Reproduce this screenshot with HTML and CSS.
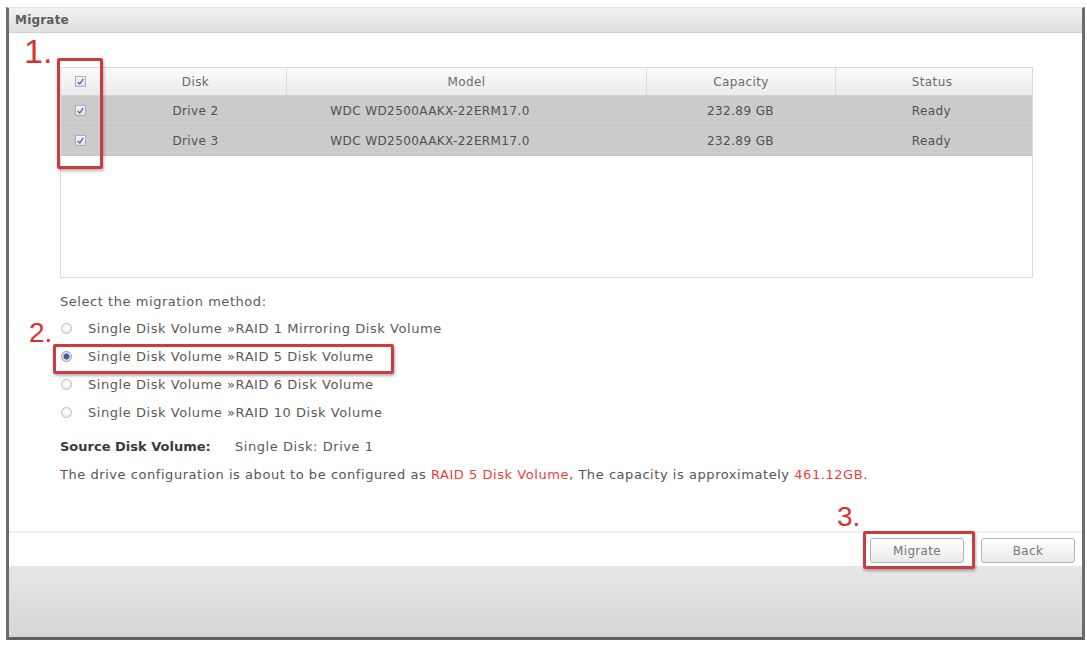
FILE: index.html
```html
<!DOCTYPE html>
<html>
<head>
<meta charset="utf-8">
<title>Migrate</title>
<link rel="stylesheet" href="styles.css">
</head>
<body>
<div class="dialog">
  <div class="titlebar">Migrate</div>

  <div class="content">
    <div class="grid">
      <div class="grid-row grid-head">
        <div class="cell cell-chk"><span class="chk"><svg viewBox="0 0 10 10"><polyline points="2,5.5 4.2,7.8 8,2.2"/></svg></span></div>
        <div class="cell">Disk</div>
        <div class="cell">Model</div>
        <div class="cell">Capacity</div>
        <div class="cell">Status</div>
      </div>
      <div class="grid-row grid-item">
        <div class="cell cell-chk"><span class="chk"><svg viewBox="0 0 10 10"><polyline points="2,5.5 4.2,7.8 8,2.2"/></svg></span></div>
        <div class="cell">Drive 2</div>
        <div class="cell cell-model">WDC WD2500AAKX-22ERM17.0</div>
        <div class="cell">232.89 GB</div>
        <div class="cell">Ready</div>
      </div>
      <div class="grid-row grid-item">
        <div class="cell cell-chk"><span class="chk"><svg viewBox="0 0 10 10"><polyline points="2,5.5 4.2,7.8 8,2.2"/></svg></span></div>
        <div class="cell">Drive 3</div>
        <div class="cell cell-model">WDC WD2500AAKX-22ERM17.0</div>
        <div class="cell">232.89 GB</div>
        <div class="cell">Ready</div>
      </div>
    </div>

    <div class="method-title">Select the migration method:</div>
    <div class="options">
      <label class="option"><span class="radio"></span>Single Disk Volume »RAID 1 Mirroring Disk Volume</label>
      <label class="option"><span class="radio radio-on"></span>Single Disk Volume »RAID 5 Disk Volume</label>
      <label class="option"><span class="radio"></span>Single Disk Volume »RAID 6 Disk Volume</label>
      <label class="option"><span class="radio"></span>Single Disk Volume »RAID 10 Disk Volume</label>
    </div>

    <div class="source"><span class="source-label">Source Disk Volume:</span><span>Single Disk: Drive 1</span></div>
    <div class="summary">The drive configuration is about to be configured as <span class="hl">RAID 5 Disk Volume</span>, The capacity is approximately <span class="hl">461.12GB</span>.</div>
  </div>

  <div class="actions">
    <button class="btn">Migrate</button>
    <button class="btn">Back</button>
  </div>
  <div class="footer"></div>
</div>

<!-- step callouts drawn over the dialog -->
<div class="step step-1">1.</div>
<div class="callout callout-1"></div>
<div class="step step-2">2.</div>
<div class="callout callout-2"></div>
<div class="step step-3">3.</div>
<div class="callout callout-3"></div>
</body>
</html>
```

FILE: styles.css
```css
html, body {
  margin: 0;
  padding: 0;
  background: #ffffff;
}

body {
  position: relative;
  width: 1087px;
  height: 646px;
  overflow: hidden;
  font-family: "DejaVu Sans", Verdana, sans-serif;
  font-size: 13px;
  letter-spacing: 0.55px;
  color: #5a5a5a;
}

.dialog {
  box-sizing: border-box;
  margin: 7px 0 0 6px;
  width: 1079px;
  height: 633px;
  border-top: 1px solid #e2e2e2;
  border-left: 3px solid #6c6c6c;
  border-right: 3px solid #6c6c6c;
  border-bottom: 3px solid #5e5e5e;
  display: flex;
  flex-direction: column;
  background: #fff;
}

.titlebar {
  height: 25px;
  flex: none;
  box-sizing: border-box;
  padding-left: 6px;
  line-height: 25px;
  font-size: 12px;
  letter-spacing: 0.2px;
  font-weight: bold;
  color: #5e5e5e;
  background: linear-gradient(#f3f3f3, #dedede);
  border-bottom: 1px solid #d0d0d0;
}

.content {
  flex: 1;
  padding: 34px 0 0 51px;
}

/* disk grid */
.grid {
  width: 973px;
  height: 211px;
  box-sizing: border-box;
  border: 1px solid #d9d9d9;
  font-size: 12px;
  letter-spacing: 0.4px;
}

.grid-row {
  display: grid;
  grid-template-columns: 44px 181px 360px 189px 193px;
}

.cell {
  display: flex;
  align-items: center;
  justify-content: center;
}

.cell-chk {
  justify-content: flex-start;
  padding-left: 14px;
}

.cell-model {
  padding-right: 72px;
}

.grid-head {
  height: 28px;
  background: linear-gradient(#fbfbfb, #ececec);
  border-bottom: 1px solid #d4d4d4;
  box-sizing: border-box;
  color: #6a6a6a;
}

.grid-head .cell + .cell + .cell {
  border-left: 1px solid #dcdcdc;
}

.grid-item {
  height: 30px;
  background: #cbcbcb;
  border-bottom: 1px solid #c2c2c2;
  box-sizing: border-box;
  color: #515151;
}

.chk {
  width: 11px;
  height: 11px;
  box-sizing: border-box;
  border: 1px solid #a9afc2;
  background: linear-gradient(#f4f5fa, #dfe2ec);
  display: inline-flex;
}

.chk svg {
  width: 9px;
  height: 9px;
  fill: none;
  stroke: #5866a4;
  stroke-width: 1.5;
}

/* migration method */
.method-title {
  margin-top: 14px;
  line-height: 20px;
}

.options {
  margin-top: 2px;
}

.option {
  display: flex;
  align-items: center;
  height: 28px;
  padding-left: 1px;
}

.radio {
  width: 11px;
  height: 11px;
  box-sizing: border-box;
  border-radius: 50%;
  border: 1px solid #bcbcbc;
  background: radial-gradient(circle at 50% 40%, #ffffff, #e6e6e6);
  margin-right: 16px;
}

.radio-on {
  border-color: #8c97b4;
  background: radial-gradient(circle, #3f5a93 0, #3f5a93 2.5px, #dfe4ef 3.5px, #f5f6fa 100%);
}

.source {
  margin-top: 11px;
  line-height: 20px;
  display: flex;
}

.source-label {
  width: 175px;
  font-weight: bold;
  letter-spacing: 0;
  color: #3a3a3a;
}

.summary {
  margin-top: 8px;
  line-height: 20px;
  color: #555;
}

.hl {
  color: #ee3c3c;
}

/* button strip */
.actions {
  flex: none;
  height: 35px;
  box-sizing: border-box;
  border-top: 2px solid #efefef;
  display: flex;
  justify-content: flex-end;
  align-items: center;
  gap: 17px;
  padding: 2px 7px 0 0;
}

.btn {
  width: 94px;
  height: 25px;
  font-family: "DejaVu Sans", Verdana, sans-serif;
  font-size: 12px;
  letter-spacing: 0.3px;
  color: #777;
  border: 1px solid #b4b4b4;
  border-radius: 3px;
  background: linear-gradient(#ffffff, #e9e9e9);
  padding: 0;
}

.footer {
  flex: none;
  height: 71px;
  background: linear-gradient(#e6e6e6, #d6d6d6);
}

/* step callouts */
.step {
  position: absolute;
  font-family: "Liberation Sans", Arial, sans-serif;
  letter-spacing: 0;
  color: #d8322c;
  line-height: 1;
}

.step-1 {
  left: 24px;
  top: 34px;
  font-size: 34px;
}

.step-2 {
  left: 29px;
  top: 319px;
  font-size: 28px;
}

.step-3 {
  left: 837px;
  top: 503px;
  font-size: 28px;
}

.callout {
  position: absolute;
  box-sizing: border-box;
  border: 3px solid #cc3b3d;
  border-radius: 2px;
  box-shadow: 1px 2px 3px rgba(0, 0, 0, 0.3);
}

.callout-1 {
  left: 57px;
  top: 58px;
  width: 46px;
  height: 111px;
}

.callout-2 {
  left: 53px;
  top: 344px;
  width: 341px;
  height: 30px;
}

.callout-3 {
  left: 863px;
  top: 531px;
  width: 112px;
  height: 38px;
}
```
